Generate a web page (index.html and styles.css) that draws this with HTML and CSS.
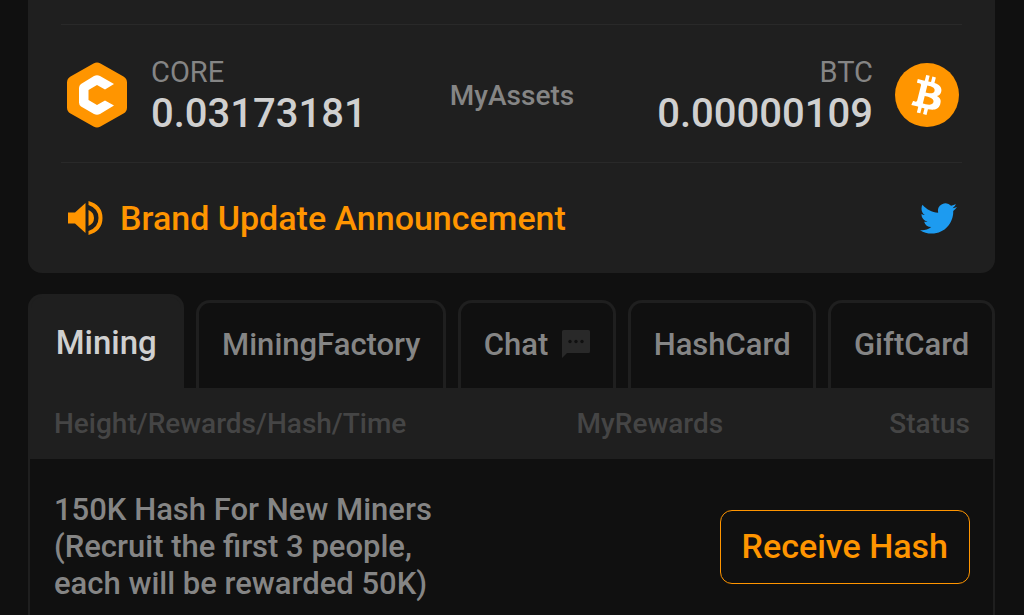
FILE: index.html
```html
<!DOCTYPE html>
<html lang="en">

<head>
  <meta charset="utf-8">
  <meta name="viewport" content="width=device-width, initial-scale=1">
  <title>Mining</title>
  <link rel="stylesheet" href="styles.css">
</head>

<body>
  <section class="card">
    <div class="assets">
      <div class="asset">
        <svg class="coin" viewBox="0 0 64 66" aria-hidden="true">
          <path d="M28.500 1.500Q32 -.500 35.500 1.500L58.500 14.500Q62 16.500 62 20.500V45.500Q62 49.500 58.500 51.500L35.500 64.500Q32 66.500 28.500 64.500L5.500 51.500Q2 49.500 2 45.500V20.500Q2 16.500 5.500 14.500Z" fill="#ff9500"/>
          <path d="M29 14q3-1.600 6 0l14 8-9 5.500L32 23l-8.500 5v10l8.500 5 8-4.500 9 5L35 52q-3 1.600-6 0l-13-7.500q-2-1.500-2-4V26q0-2.500 2-4Z" fill="#fff"/>
        </svg>
        <div>
          <div class="asset-name">CORE</div>
          <div class="asset-value">0.03173181</div>
        </div>
      </div>
      <div class="assets-title">MyAssets</div>
      <div class="asset asset-right">
        <div>
          <div class="asset-name">BTC</div>
          <div class="asset-value">0.00000109</div>
        </div>
        <svg class="coin" viewBox="0 0 32 32" aria-hidden="true">
          <circle cx="16" cy="16" r="16" fill="#ff9500"/>
          <path fill="#fff" d="M23.189 14.020c.314-2.096-1.283-3.223-3.465-3.975l.708-2.840-1.728-.430-.690 2.765c-.454-.114-.920-.220-1.385-.326l.695-2.783L15.596 6l-.708 2.839c-.376-.086-.746-.170-1.104-.260l.002-.009-2.384-.595-.460 1.846s1.283.294 1.256.312c.700.175.826.638.805 1.006l-.806 3.235c.048.012.110.030.180.057l-.183-.045-1.130 4.532c-.086.212-.303.531-.793.410.018.025-1.256-.313-1.256-.313l-.858 1.978 2.250.561c.418.105.828.215 1.231.318l-.715 2.872 1.727.430.708-2.840c.472.127.930.245 1.378.357l-.706 2.828 1.728.430.715-2.866c2.948.558 5.164.333 6.097-2.333.752-2.146-.037-3.385-1.588-4.192 1.130-.260 1.980-1.003 2.207-2.538zm-3.950 5.538c-.533 2.147-4.148.986-5.320.695l.950-3.805c1.172.293 4.929.872 4.370 3.110zm.535-5.569c-.487 1.953-3.495.960-4.470.717l.860-3.450c.975.243 4.118.696 3.610 2.733z"/>
        </svg>
      </div>
    </div>
    <div class="notice">
      <a class="notice-link" href="#announcement">
        <svg class="icon-sound" viewBox="0 0 36 34" aria-hidden="true">
          <path fill="#ff9500" d="M1 11.500h7L18.500 2v30L8 22.500H1ZM21.500 9q5.500 2.500 5.500 8t-5.500 8ZM21.500 0q14 4 14 17t-14 17v-4q10-3.500 10-13t-10-13Z"/>
        </svg>
        Brand Update Announcement
      </a>
      <a class="twitter" href="#twitter" aria-label="Twitter">
        <svg class="icon-twitter" viewBox="0 0 24 24" aria-hidden="true">
          <path fill="#1d9bf0" d="M23.953 4.570a10 10 0 01-2.825.775 4.958 4.958 0 002.163-2.723c-.951.555-2.005.959-3.127 1.184a4.920 4.920 0 00-8.384 4.482C7.690 8.095 4.067 6.130 1.640 3.162a4.822 4.822 0 00-.666 2.475c0 1.710.870 3.213 2.188 4.096a4.904 4.904 0 01-2.228-.616v.060a4.923 4.923 0 003.946 4.827 4.996 4.996 0 01-2.212.085 4.936 4.936 0 004.604 3.417 9.867 9.867 0 01-6.102 2.105c-.390 0-.779-.023-1.170-.067a13.995 13.995 0 007.557 2.209c9.053 0 13.998-7.496 13.998-13.985 0-.210 0-.420-.015-.630A9.935 9.935 0 0024 4.590z"/>
        </svg>
      </a>
    </div>
  </section>

  <nav class="tabs">
    <button class="tab active" type="button">Mining</button>
    <button class="tab" type="button">MiningFactory</button>
    <button class="tab" type="button">Chat
      <svg class="icon-chat" viewBox="0 0 28 28" aria-hidden="true">
        <path fill="#292929" d="M1.500 0h25Q28 0 28 1.500v20q0 1.500-1.500 1.500H5l-5 5V1.500Q0 0 1.500 0Z"/>
        <circle cx="8" cy="11.500" r="1.700" fill="#101010"/>
        <circle cx="14" cy="11.500" r="1.700" fill="#101010"/>
        <circle cx="20" cy="11.500" r="1.700" fill="#101010"/>
      </svg>
    </button>
    <button class="tab" type="button">HashCard</button>
    <button class="tab" type="button">GiftCard</button>
  </nav>

  <table class="rewards">
    <thead>
      <tr>
        <th class="col-height">Height/Rewards/Hash/Time</th>
        <th class="col-rewards">MyRewards</th>
        <th class="col-status">Status</th>
      </tr>
    </thead>
    <tbody>
      <tr>
        <td>150K Hash For New Miners<br>(Recruit the first 3 people,<br>each will be rewarded 50K)</td>
        <td class="action" colspan="2"><button class="receive" type="button">Receive Hash</button></td>
      </tr>
    </tbody>
  </table>
</body>

</html>
```

FILE: styles.css
```css
html, body {
  margin: 0;
  height: 100%;
  overflow: hidden;
}
body {
  padding: 0 29px 0 28px;
  box-sizing: border-box;
  background: #101010;
  color: #858585;
  font-family: Roboto, "Liberation Sans", sans-serif;
  font-weight: 500;
}
button {
  font: inherit;
  cursor: pointer;
}
svg {
  display: block;
  flex: none;
}
a {
  text-decoration: none;
}
.card {
  padding: 24px 33px 0;
  background: #1f1f1f;
  border-radius: 0 0 14px 14px;
}
.assets {
  display: grid;
  grid-template-columns: 1fr auto 1fr;
  align-items: center;
  padding: 28px 3px 25px 4px;
  border-top: 1px solid #292929;
  border-bottom: 1px solid #292929;
}
.asset {
  display: flex;
  align-items: center;
  gap: 22px;
}
.asset-right {
  justify-content: flex-end;
  text-align: right;
}
.coin {
  width: 64px;
  height: 66px;
}
.asset-name {
  font-size: 29px;
  line-height: 38px;
  font-weight: 400;
}
.asset-value {
  font-size: 40px;
  line-height: 46px;
  color: #d0d0d0;
}
.assets-title {
  font-size: 28px;
}
.notice {
  display: flex;
  align-items: center;
  justify-content: space-between;
  height: 110px;
  padding: 0 5px 0 6px;
}
.notice-link {
  display: flex;
  align-items: center;
  gap: 17px;
  font-size: 34px;
  color: #ff9500;
}
.icon-sound {
  width: 36px;
  height: 34px;
}
.icon-twitter {
  width: 37px;
  height: 37px;
}
.tabs {
  display: flex;
  align-items: flex-end;
  gap: 12px;
  margin-top: 21px;
}
.tab {
  display: flex;
  flex: 1 1 auto;
  align-items: center;
  justify-content: center;
  gap: 14px;
  height: 88px;
  padding: 0 20px 3px;
  color: #858585;
  background: transparent;
  border: 3px solid #1f1f1f;
  border-bottom: 0;
  border-radius: 14px 14px 0 0;
  font-size: 31px;
}
.tab.active {
  height: 94px;
  padding: 0 22px;
  color: #d0d0d0;
  background: #1f1f1f;
  font-size: 33px;
}
.icon-chat {
  width: 28px;
  height: 28px;
}
.rewards {
  width: 100%;
  table-layout: fixed;
  border-spacing: 0;
  border: 2px solid #1f1f1f;
  border-top: 0;
  text-align: left;
}
.rewards th {
  height: 71px;
  padding: 0;
  background: #1f1f1f;
  color: #454545;
  font-size: 28px;
  font-weight: 500;
}
.rewards td {
  padding: 32px 0;
  font-size: 31px;
  line-height: 37px;
}
.rewards tr > :first-child {
  padding-left: 24px;
}
.rewards tr > :last-child {
  padding-right: 23px;
  text-align: right;
}
.col-height {
  width: 50%;
}
.rewards .col-rewards {
  text-align: center;
}
.receive {
  height: 74px;
  padding: 0 21px;
  color: #ff9500;
  background: transparent;
  border: 1px solid #ff9500;
  border-radius: 12px;
  font-size: 34px;
}
```
